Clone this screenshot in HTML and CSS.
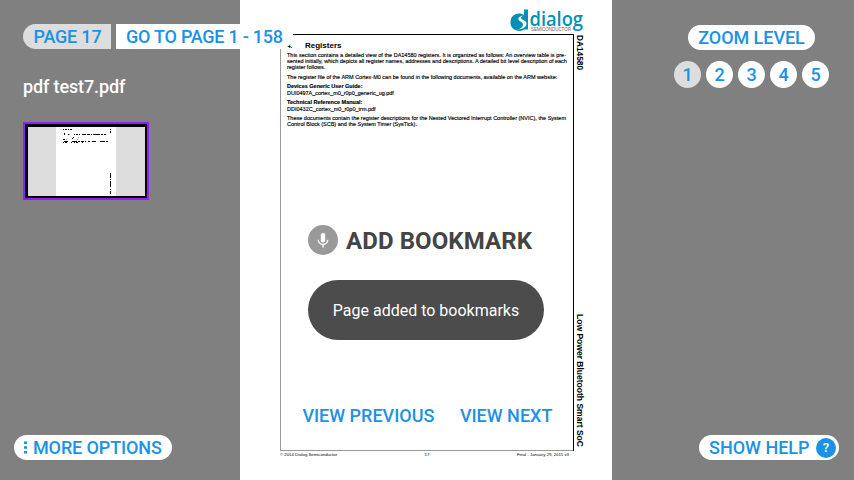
FILE: index.html
```html
<!DOCTYPE html>
<html lang="en">
<head>
<meta charset="utf-8">
<title>pdf test7.pdf</title>
<link rel="stylesheet" href="styles.css">
</head>
<body>
<main class="viewer">
  <article class="sheet">
    <header class="sheet-head">
      <svg class="logo" width="76" height="26" viewBox="0 0 76 26">
        <path fill="#0090b5" d="M14 0.5h4v20h-4c-1 1-3 1.600-5 1.400C3.500 21.500 0.500 18 0.500 13.500 0.500 8 4 4.500 9 4.500c2 0 3.800.6 5 1.500z"/>
        <path fill="#fff" d="M13.500 6.500C10 7 8 8.500 8.500 10.500c.5 2 5 2.500 4.500 5.500-.3 2-2.500 3.500-5 4.500 5.500-.5 8.500-3 8.500-6 0-3.500-5.500-3.500-5.500-5.500 0-1 1-2 2.500-2.500z"/>
        <text class="logo-name" x="19.500" y="17" textLength="53.500" lengthAdjust="spacingAndGlyphs">dialog</text>
        <text class="logo-sub" x="21" y="22" textLength="40" lengthAdjust="spacingAndGlyphs">SEMICONDUCTOR</text>
      </svg>
    </header>
    <div class="sheet-body">
      <div class="frame">
        <h1><span>4.</span>Registers</h1>
        <p class="full">This section contains a detailed view of the DA14580 registers. It is organized as follows: An overview table is pre-</p>
        <p class="full">sented initially, which depicts all register names, addresses and descriptions. A detailed bit level description of each</p>
        <p class="end">register follows.</p>
        <p class="end w270">The register file of the ARM Cortex-M0 can be found in the following documents, available on the ARM website:</p>
        <p class="w75"><b>Devices Generic User Guide:</b></p>
        <p class="end w107">DUI0497A_cortex_m0_r0p0_generic_ug.pdf</p>
        <p class="w75"><b>Technical Reference Manual:</b></p>
        <p class="end">DDI0432C_cortex_m0_r0p0_trm.pdf</p>
        <p class="full">These documents contain the register descriptions for the Nested Vectored Interrupt Controller (NVIC), the System</p>
        <p class="last">Control Block (SCB) and the System Timer (SysTick).</p>
      </div>
      <aside class="spine"><b class="chip">DA14580</b><b class="title">Low Power Bluetooth Smart SoC</b></aside>
    </div>
    <footer class="sheet-foot"><span>© 2014 Dialog Semiconductor</span><span>17</span><span>Final - January 29, 2015 v3</span></footer>
  </article>

  <section class="controls">
    <div class="left">
      <nav class="pager"><span class="pill current">PAGE 17</span><span class="pill goto">GO TO PAGE 1 - 158</span></nav>
      <div class="filename">pdf test7.pdf</div>
      <div class="thumb">
        <svg width="60" height="69" viewBox="0 0 60 69" shape-rendering="crispEdges">
          <g fill="none" stroke="#000">
            <path stroke-dasharray="1 1 2 1 1 1 2" d="M7 2.500h9"/>
            <path stroke-dasharray="1 3 1 5 1 1 2 1 1 2 4 1 3 1 1 1 7 1 2 1 2" d="M8 7.500h42"/>
            <path d="M8 6.500h1M17 10.500h1M16 11.500h1M7 12.500h2M54 2.500h1"/>
            <path stroke="#aaa" d="M10 12.500h1M21 12.500h1M22 10.500h1M13 7.500h1M26 14.500h1M38 14.500h2"/>
            <path stroke-dasharray="4 4 5 1 2 1 3 1 1 2 2 2" d="M8 14.500h45"/>
            <path stroke-dasharray="1 1 2 4 1 2" d="M7 15.500h21"/>
            <path d="M54.500 2v1M54.500 4v2"/>
            <path stroke-dasharray="5 1 1 1 6 2 1 1 3 1" d="M54.500 46v22"/>
          </g>
        </svg>
      </div>
      <div class="pill more">
        <svg width="3" height="13" viewBox="0 0 3 13"><path fill="#1b92e4" d="M0 .5h3v2.500H0zM0 5.200h3v2.500H0zM0 10h3v2.500H0z"/></svg>MORE OPTIONS
      </div>
    </div>
    <div class="center">
      <div class="bookmark">
        <svg width="30" height="30" viewBox="0 0 30 30"><circle cx="15" cy="15" r="15" fill="#999"/><rect x="12.800" y="8" width="4.400" height="9.500" rx="2.200" fill="#fff"/><path d="M10.300 14.700a4.700 4.700 0 0 0 9.400 0M15 19.500v3" fill="none" stroke="#fff" stroke-width="1.400"/></svg>
        <span>ADD BOOKMARK</span>
      </div>
      <div class="toast">Page added to bookmarks</div>
      <nav class="steps"><span>VIEW PREVIOUS</span><span>VIEW NEXT</span></nav>
    </div>
    <div class="right">
      <div class="pill zoom">ZOOM LEVEL</div>
      <div class="levels"><span class="on">1</span><span>2</span><span>3</span><span>4</span><span>5</span></div>
      <div class="pill help">SHOW HELP<span class="q">?</span></div>
    </div>
  </section>
</main>
</body>
</html>
```

FILE: styles.css
```css
* { box-sizing: border-box; margin: 0; padding: 0; }
body { width: 854px; height: 480px; overflow: hidden; background: #808080; font-family: Roboto, sans-serif; }
.viewer { display: grid; width: 854px; height: 480px; background: #808080; }
.sheet, .controls { grid-area: 1 / 1; min-width: 0; }

/* document page */
.sheet { margin-left: 240.4px; width: 372px; height: 480px; background: #fff; color: #000; font-family: "Liberation Sans", Arial, sans-serif; font-size: 5.500px; line-height: 6.4px; }
.sheet-head { height: 34px; padding: 9px 0 0 269.6px; }
.logo { display: block; overflow: visible; }
.logo-name { font-family: "Open Sans", sans-serif; font-size: 20.500px; font-weight: 600; fill: #0090b5; }
.logo-sub { font-size: 4.600px; fill: #665f50; }
.sheet-body { display: flex; height: 417px; padding-left: 39.6px; }
.frame { width: 294px; height: 417px; border-right: 1px solid #000; padding: 8px 0 0 7px; background: linear-gradient(#000, #000) 13px 0 / 281px 1px no-repeat, linear-gradient(#999, #999) 0 15px / 1px 402px no-repeat, linear-gradient(#999, #999) 0 416px / 294px 1px no-repeat; }
.frame h1 { font-size: 8px; line-height: 8px; height: 9.600px; display: flex; }
.frame h1 span { width: 18px; font-size: 6.500px; line-height: 8px; }
.frame p { height: 6.4px; white-space: nowrap; text-align-last: justify; -webkit-text-stroke: .15px #000; }
.frame .full { width: 279px; }
.frame .end { margin-bottom: 3.100px; width: max-content; }
.frame .w270 { width: 270px; }
.frame .w75 { width: 75px; }
.frame .w107 { width: 107px; letter-spacing: -.02px; }
.frame .last { width: 129px; }
.frame b { font-size: 5.500px; }
.spine { width: 12px; display: flex; flex-direction: column; justify-content: space-between; padding: 1px 0 4px 1px; }
.spine b { writing-mode: vertical-rl; white-space: nowrap; line-height: 10px; width: 10px; }
.chip { font-size: 8.300px; }
.title { font-size: 8.520px; }
.sheet-foot { display: grid; grid-template-columns: 1fr auto 1fr; width: 289px; margin-left: 39.6px; padding-top: 1px; font-size: 4.300px; line-height: 6px; }
.sheet-foot span:nth-child(2) { padding-left: 5px; }
.sheet-foot span:last-child { text-align: right; }

/* controls over the page */
.controls { display: grid; grid-template-columns: 241px 372px 241px; font-size: 18px; font-weight: 500; line-height: 25px; color: #1b92e4; white-space: nowrap; }
.left, .center, .right { display: flex; flex-direction: column; min-width: 0; height: 480px; }
.pill { height: 25px; border-radius: 13px; background: #fff; display: flex; align-items: center; }
.left { padding: 24px 0 20px 23px; align-items: flex-start; }
.pager { display: flex; gap: 5px; }
.current { width: 88px; padding-left: 10.500px; background: #ddd; border-radius: 13px 0 0 13px; letter-spacing: -.2px; }
.goto { width: 177px; padding-left: 10px; border-radius: 0 13px 13px 0; letter-spacing: -.24px; }
.filename { margin-top: 25px; color: #fff; letter-spacing: -.13px; }
.thumb { margin-top: 23px; width: 126px; height: 78px; border: 2px solid #8c20ff; background: linear-gradient(#ddd, #ddd) 3px 3px / 117px 69px no-repeat #000; padding: 3px 0 0 31px; }
.thumb svg { display: block; background: #fff; }
.more { margin: auto 0 0 -9px; width: 158px; padding-left: 10px; gap: 6px; letter-spacing: -.12px; }
.center { padding: 225px 0 0 67px; }
.bookmark { display: flex; align-items: center; gap: 8px; height: 30px; font-size: 24px; font-weight: 700; color: #444; letter-spacing: .09px; }
.bookmark span { padding-top: 2px; }
.toast { margin-top: 25px; width: 236px; height: 60px; border-radius: 30px; background: #4c4c4c; color: #fff; font-size: 16px; font-weight: 400; line-height: 61px; text-align: center; }
.steps { display: flex; gap: 25.500px; margin: 63px 0 0 -5.600px; }
.right { padding: 25px 0 20px 61px; align-items: flex-start; }
.zoom { margin-left: 14px; width: 127px; justify-content: center; letter-spacing: -.05px; }
.levels { display: flex; gap: 5px; margin-top: 11px; }
.levels span { width: 27px; height: 27px; border-radius: 50%; background: #fff; text-align: center; line-height: 27px; }
.levels .on { background: #ddd; }
.help { margin: auto 0 0 25px; width: 140px; padding: 0 3px 0 10px; justify-content: space-between; }
.q { width: 20px; height: 20px; border-radius: 50%; background: #1b92e4; color: #fff; font-size: 13px; line-height: 20px; text-align: center; }
```
